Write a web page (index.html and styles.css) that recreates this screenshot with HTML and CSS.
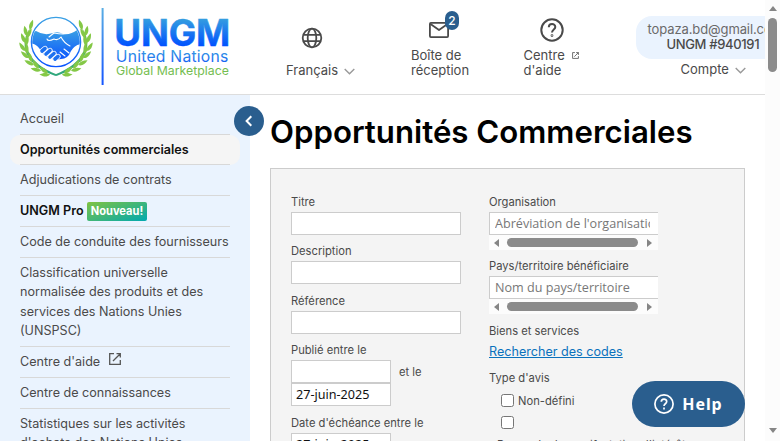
FILE: index.html
```html
<!DOCTYPE html>
<html lang="fr">
<head>
<meta charset="utf-8">
<title>UNGM</title>
<link rel="stylesheet" href="styles.css">
</head>
<body>
<div class="page">
  <header class="header">
    <svg class="logo" width="220" height="84" viewBox="0 0 220 84">
      <defs>
        <linearGradient id="blue" x1="0" y1="0" x2="0" y2="1"><stop offset="0" stop-color="#3aa0e4"/><stop offset="1" stop-color="#0a55ff"/></linearGradient>
        <linearGradient id="bar" gradientUnits="userSpaceOnUse" x1="0" y1="3" x2="0" y2="80"><stop offset="0" stop-color="#5aaee4"/><stop offset="1" stop-color="#1455ff"/></linearGradient>
        <linearGradient id="word" gradientUnits="userSpaceOnUse" x1="0" y1="13" x2="0" y2="41"><stop offset="0" stop-color="#36a0df"/><stop offset="1" stop-color="#0052ff"/></linearGradient>
        <linearGradient id="sub" gradientUnits="userSpaceOnUse" x1="0" y1="45" x2="0" y2="58"><stop offset="0" stop-color="#3a9fe2"/><stop offset="1" stop-color="#1460f5"/></linearGradient>
        <linearGradient id="green" gradientUnits="userSpaceOnUse" x1="20" y1="10" x2="0" y2="66"><stop offset="0" stop-color="#84c846"/><stop offset=".55" stop-color="#5cb457"/><stop offset="1" stop-color="#119f98"/></linearGradient>
        <clipPath id="disc"><circle cx="45" cy="37" r="23.8"/></clipPath>
        <path id="leaf" d="M0 0C-3.4-2.5-3.4-6-1.5-10.5C1-7 1.8-3 0 0Z"/>
        <g id="branch" fill="url(#green)">
          <path d="M20 22C10 38 16 58 46 69.5L44.5 71C13 60 7 38 20 22Z"/>
          <use href="#leaf" transform="translate(19 25) rotate(24)"/>
          <use href="#leaf" transform="translate(16 31) rotate(-6)"/>
          <use href="#leaf" transform="translate(14.5 38) rotate(-16)"/>
          <use href="#leaf" transform="translate(14.5 46) rotate(-28)"/>
          <use href="#leaf" transform="translate(18 53) rotate(-42)"/>
          <use href="#leaf" transform="translate(23 60) rotate(-56)"/>
          <use href="#leaf" transform="translate(30 65.5) rotate(-70)"/>
          <use href="#leaf" transform="translate(39 69.5) rotate(-82)"/>
          <use href="#leaf" transform="translate(16 33) rotate(34)"/>
          <use href="#leaf" transform="translate(15 41) rotate(20)"/>
          <use href="#leaf" transform="translate(16 49) rotate(8)"/>
          <use href="#leaf" transform="translate(21 57) rotate(-10)"/>
          <use href="#leaf" transform="translate(28 63.5) rotate(-28)"/>
          <use href="#leaf" transform="translate(37 68) rotate(-46)"/>
        </g>
      </defs>
      <use href="#branch"/>
      <use href="#branch" transform="translate(90 0) scale(-1 1)"/>
      <circle cx="45" cy="37" r="24.6" fill="#fff" stroke="url(#blue)" stroke-width="1.4"/>
      <g clip-path="url(#disc)" fill="url(#blue)">
        <path d="M19 27Q23 27 25 26Q33 31 42 28Q47 26 52 29Q60 30 66 25Q68 27 71 27V39Q64 39 60 46Q57 54 50 54L43 55L33 50L28 43Q24 38 19 39Z"/>
      </g>
      <path d="M36 34Q37 37 43 34Q47 36 50 32Q53 38 59 41M38 32L43 28Q48 29 52 29L57 28M53 44L58 48M49 47L54 51" fill="none" stroke="#fff" stroke-width="1.1" stroke-linecap="round" stroke-linejoin="round"/>
      <path d="M31 46L34 43.5M35 49L39 45.5M39 52L43 48.5M44 54L47 51.5" stroke="#fff" stroke-width="5.2" stroke-linecap="round"/>
      <path d="M31 46L34 43.5M35 49L39 45.5M39 52L43 48.5M44 54L47 51.5" stroke="#1c71f0" stroke-width="3.6" stroke-linecap="round"/>
      <rect x="90.6" y="3" width="2" height="77" fill="url(#bar)"/>
      <text x="103.3" y="40.6" class="word" fill="url(#word)" stroke="url(#word)" stroke-width=".5" textLength="116">UNGM</text>
      <text x="104.8" y="56.6" class="united" fill="url(#sub)" textLength="112.5">United Nations</text>
      <text x="105" y="70.3" class="market" fill="#74bd50" textLength="113">Global Marketplace</text>
    </svg>
    <div class="tool lang">
      <svg width="24" height="24" viewBox="0 0 24 24" fill="none" stroke="#4a4a4a" stroke-width="1.8"><circle cx="12" cy="12" r="9.3"/><ellipse cx="12" cy="12" rx="4.3" ry="9.3"/><path d="M3.3 8.8H20.7M3.3 15.2H20.7"/></svg>
      <div class="caption">Français <svg class="chevron" width="11" height="7" viewBox="0 0 11 7"><path d="M.7 1L5.5 5.7L10.3 1"/></svg></div>
    </div>
    <div class="tool inbox">
      <span class="mail"><svg width="20" height="16" viewBox="0 0 20 16" fill="none" stroke="#4a4a4a" stroke-width="1.8" stroke-linejoin="round"><rect x=".9" y=".9" width="18.2" height="14.2" rx="1"/><path d="M1.5 2L10 8L18.5 2"/></svg><b class="badge">2</b></span>
      <div class="caption">Boîte de<br>réception</div>
    </div>
    <div class="tool help-link">
      <svg width="24" height="24" viewBox="0 0 24 24" fill="none" stroke="#4a4a4a" stroke-width="2"><circle cx="12" cy="12" r="10.7"/><path d="M8.8 9.3C8.8 5 15.3 5 15.3 9C15.3 11.5 12 11.5 12 14.6"/><circle cx="12" cy="17.6" r=".4"/></svg>
      <div class="caption">Centre <svg class="ext" width="7" height="7" viewBox="0 0 12 12"><path d="M5 1H1V11H11V7M7 1H11V5M11 1L4 8"/></svg><br>d'aide</div>
    </div>
    <div class="account">
      <div class="user"><span>topaza.bd@gmail.com</span><strong>UNGM #940191</strong></div>
      <div class="caption">Compte <svg class="chevron" width="11" height="7" viewBox="0 0 11 7"><path d="M.7 1L5.5 5.7L10.3 1"/></svg></div>
    </div>
  </header>
  <div class="body">
    <nav class="side">
      <a>Accueil</a>
      <a class="current">Opportunités commerciales</a>
      <a>Adjudications de contrats</a>
      <a class="pro">UNGM Pro <span class="new">Nouveau!</span></a>
      <a>Code de conduite des fournisseurs</a>
      <a>Classification universelle normalisée des produits et des services des Nations Unies (UNSPSC)</a>
      <a>Centre d'aide <svg class="ext big" width="12" height="12" viewBox="0 0 12 12"><path d="M5 .7H.7V11.3H11.3V7M7.5 .7H11.3V4.5M11.3 .7L4 8"/></svg></a>
      <a>Centre de connaissances</a>
      <a>Statistiques sur les activités d'achats des Nations Unies</a>
      <button class="collapse" aria-label="Réduire"><svg width="8" height="12" viewBox="0 0 8 12"><path d="M6.3 1.2L1.6 6L6.3 10.8" fill="none" stroke="#fff" stroke-width="2"/></svg></button>
    </nav>
    <main class="main">
      <h1>Opportunités Commerciales</h1>
      <section class="panel">
        <div class="left">
          <label>Titre</label><div class="field"></div>
          <label class="gap">Description</label><div class="field"></div>
          <label class="gap">Référence</label><div class="field"></div>
          <label class="gap">Publié entre le</label>
          <div class="row"><div class="field date"></div><span>et le</span></div>
          <div class="field date">27-juin-2025</div>
          <label class="gap">Date d'échéance entre le</label>
          <div class="field date">27-juin-2025</div>
        </div>
        <div class="right">
          <label>Organisation</label>
          <div class="field wide"><span>Abréviation de l'organisation</span></div>
          <div class="hbar"><i class="arrow prev"></i><i class="thumb"></i><i class="arrow next"></i></div>
          <label class="second">Pays/territoire bénéficiaire</label>
          <div class="field wide"><span>Nom du pays/territoire</span></div>
          <div class="hbar"><i class="arrow prev"></i><i class="thumb"></i><i class="arrow next"></i></div>
          <label class="goods">Biens et services</label>
          <a class="codes">Rechercher des codes</a>
          <label class="type">Type d'avis</label>
          <div class="check"><i class="box"></i><span>Non-défini</span></div>
          <div class="check"><i class="box"></i></div>
          <div class="wrapped">Demande de manifestation d'intérêt</div>
        </div>
      </section>
    </main>
  </div>
</div>
<div class="vbar"><i class="up"></i><i class="vthumb"></i><i class="down"></i></div>
<button class="help"><svg width="20" height="20" viewBox="0 0 20 20" fill="none" stroke="#fff" stroke-width="1.7"><circle cx="10" cy="10" r="9.1"/><path d="M7.3 7.8C7.3 4.3 12.7 4.3 12.7 7.6C12.7 9.7 10 9.8 10 12"/><path d="M10 13.6V15.4"/></svg><span>Help</span></button>
</body>
</html>
```

FILE: styles.css
```css
* { box-sizing: border-box; }
body { margin: 0; height: 441px; overflow: hidden; display: flex; background: #fff; color: #4a4a4a; font: 13px/19.5px Inter, sans-serif; }
.page { width: 765px; height: 441px; overflow: hidden; flex: none; }
.header { height: 95px; border-bottom: 1px solid #ddd; display: flex; align-items: flex-start; overflow: hidden; padding-left: 11px; }
.logo { flex: none; margin-top: 5px; }
.word { font: 700 36.7px Inter, sans-serif; }
.united { font: 400 15.7px Inter, sans-serif; }
.market { font: 400 12.3px Inter, sans-serif; }
.tool, .account { flex: none; }
.tool { display: flex; flex-direction: column; }
.caption { line-height: 15px; white-space: nowrap; }
.chevron { margin-left: 2px; fill: none; stroke: #999; stroke-width: 1.4; }
.lang { margin: 26px 0 0 55px; width: 125px; }
.lang > svg { margin-left: 14px; }
.lang .caption { margin-top: 13px; }
.inbox { margin-top: 22px; width: 112.5px; }
.mail { position: relative; width: 20px; height: 16px; margin-left: 18px; }
.mail svg { display: block; }
.badge { position: absolute; left: 16px; top: -11px; width: 14px; height: 19px; border-radius: 7px; background: #2a5e8e; color: #fff; font: 500 12px/19px Inter, sans-serif; text-align: center; }
.inbox .caption { margin-top: 10px; }
.help-link { margin-top: 18px; width: 112px; }
.help-link > svg { margin-left: 16px; }
.help-link .caption { margin-top: 6px; }
.ext { fill: none; stroke: #555; stroke-width: 1.4; margin-left: 4px; }
.help-link .ext { vertical-align: 1px; }
.big { stroke-width: 1.3; margin-left: 5px; vertical-align: 1px; }
.account { margin-top: 16px; width: 151px; }
.user { height: 43px; border-radius: 16px; background: #eaf3fe; padding: 6px 12px; line-height: 15px; display: flex; flex-direction: column; align-items: flex-start; color: #6a6a6a; letter-spacing: -.1px; }
.user strong { font-weight: 500; color: #4a4a4a; letter-spacing: -.35px; margin-left: 19px; }
.account .caption { margin: 3px 0 0 45px; }
.body { display: flex; height: 346px; }
.side { position: relative; flex: none; width: 250px; background: #eaf3fe; padding: 9px 20px 0; font-size: 12.6px; }
.side a { display: block; padding: 5.2px 0; border-bottom: 1px solid #d8d8d8; }
.side .current { font-weight: 600; color: #111; margin: 0 -10px; padding: 5px 10px; background: #f5f5f5; border: 0; border-radius: 10px; height: 30px; }
.side .current::after { content: ""; display: block; margin-top: 4.5px; border-bottom: 1px solid #d8d8d8; }
.side .pro { font-weight: 600; color: #111; height: 31px; white-space: nowrap; }
.new { display: inline-block; height: 19px; line-height: 19px; padding: 0 4px; border-radius: 2px; background: linear-gradient(160deg, #80c342, #00a9b0); color: #fff; font-size: 11.1px; font-weight: 700; }
.collapse { position: absolute; left: 234px; top: 11px; width: 30px; height: 30px; padding: 0; border: 0; border-radius: 50%; background: #2a5e8e; display: flex; align-items: center; justify-content: center; }
.main { width: 515px; padding: 18px 20px 0; }
h1 { margin: 0 0 17px; height: 38px; line-height: 38px; font-size: 31.2px; font-weight: 600; color: #000; white-space: nowrap; }
.panel { width: 475px; height: 500px; border: 1px solid #ccc; background: #f4f4f4; padding: 25px 20px; display: flex; gap: 28px; font-size: 11.2px; }
.left { width: 170px; }
.right { width: 169px; }
label { display: block; height: 18px; line-height: 17px; white-space: nowrap; }
.gap { margin-top: 8.4px; }
.field { height: 23px; border: 1px solid #ccc; background: #fff; color: #111; font: 12.6px/22px "Noto Sans", sans-serif; padding: 0 5px; }
.date { width: 100px; padding: 0 4px; }
.row { display: flex; gap: 8px; height: 23px; line-height: 25px; }
.wide { width: 169px; border-right: 0; padding-right: 8px; color: #777; font-family: "Open Sans", sans-serif; }
.wide span { display: block; overflow: hidden; white-space: nowrap; }
.hbar { height: 15px; background: #fcfcfc; display: flex; align-items: center; padding: 0 6px 0 5px; }
.thumb { width: 131px; height: 9px; border-radius: 5px; background: #8b8b8b; margin: 0 9px 0 8px; flex: none; }
.arrow { border: 4.5px solid transparent; flex: none; }
.prev { border-right: 5px solid #858585; border-left: 0; }
.next { border-left: 5px solid #858585; border-right: 0; }
.second { margin-top: 8px; }
.goods { margin-top: 8.5px; }
.codes { display: block; font-size: 12.6px; line-height: 22px; color: #0b72bd; text-decoration: underline; white-space: nowrap; }
.type { margin-top: 7.5px; }
.check { height: 22px; padding: 6px 0 0 12px; display: flex; gap: 4px; line-height: 14px; }
.box { width: 13px; height: 13px; border: 1px solid #767676; border-radius: 2.5px; background: #fff; flex: none; }
.wrapped { margin: 6px 0 0 8px; line-height: 15px; white-space: nowrap; }
.vbar { width: 15px; height: 441px; background: #fcfcfc; display: flex; flex-direction: column; align-items: center; padding: 6px 0; }
.up, .down { border: 4.5px solid transparent; }
.up { border-top: 0; border-bottom: 5px solid #858585; }
.down { margin-top: auto; margin-bottom: 2px; border-bottom: 0; border-top: 5px solid #858585; }
.vthumb { margin-top: 7px; width: 9px; height: 54px; border-radius: 5px; background: #8b8b8b; }
.help { position: fixed; left: 632px; top: 381px; width: 113px; height: 46px; border: 0; padding: 0; border-radius: 23px; background: #2a5e8e; color: #fff; display: flex; align-items: center; justify-content: center; gap: 8px; font: 700 16px/20px "Noto Sans", sans-serif; letter-spacing: .9px; }
```
